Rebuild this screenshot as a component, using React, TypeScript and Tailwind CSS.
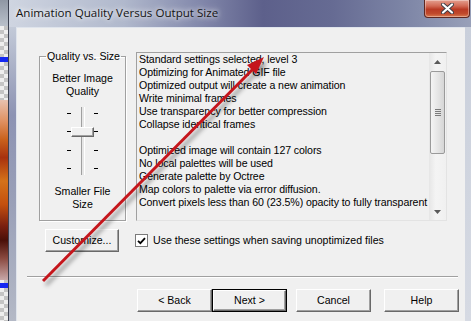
import React from "react";

const REPORT_LINES = [
  "Standard settings selected, level 3",
  "Optimizing for Animated GIF file",
  "Optimized output will create a new animation",
  "Write minimal frames",
  "Use transparency for better compression",
  "Collapse identical frames",
  "",
  "Optimized image will contain 127 colors",
  "No local palettes will be used",
  "Generate palette by Octree",
  "Map colors to palette via error diffusion.",
  "Convert pixels less than 60 (23.5%) opacity to fully transparent",
];

const checker =
  "bg-[repeating-conic-gradient(#c4c4c4_0_25%,#eeeeee_0_50%)] bg-[length:8px_8px]";

function ClassicButton({
  label,
  className,
  isDefault,
}: {
  label: string;
  className: string;
  isDefault?: boolean;
}) {
  return (
    <button
      type="button"
      className={`h-[23px] bg-[#f0f0f0] p-0 text-[10.6px] text-black ${
        isDefault ? "border border-black" : ""
      } ${className}`}
    >
      <span className="flex h-full w-full items-center justify-center border-t border-l border-t-white border-l-white border-r border-b border-r-[#696969] border-b-[#696969] shadow-[inset_-1px_-1px_0_#a0a0a0]">
        {label}
      </span>
    </button>
  );
}

function TickColumn() {
  return (
    <div className="flex w-[4px] flex-col justify-between py-[6px]">
      <div className="h-px w-[4px] bg-black" />
      <div className="h-px w-[4px] bg-black" />
      <div className="h-px w-[4px] bg-black" />
      <div className="h-px w-[4px] bg-black" />
    </div>
  );
}

function ScrollArrow({ down }: { down?: boolean }) {
  return (
    <div className="flex h-[17px] items-center justify-center">
      <svg width="7" height="4" viewBox="0 0 7 4">
        <polygon
          points={down ? "0,0 7,0 3.5,4" : "3.5,0 7,4 0,4"}
          fill="#5a5a5a"
        />
      </svg>
    </div>
  );
}

export default function App() {
  return (
    <div className="relative flex h-[321px] w-[471px] overflow-hidden bg-[#f0f0f0] font-['Liberation_Sans',Arial,sans-serif] text-[10.6px] text-black">
      {/* window behind the dialog */}
      <div className="flex w-[8px] flex-col">
        <div className="h-[26px] bg-[linear-gradient(180deg,#8f97a4,#b9c0ca)]" />
        <div className={`h-[31px] ${checker}`} />
        <div className="h-[5px] bg-[#1428f2]" />
        <div className={`h-[38px] ${checker}`} />
        <div className="h-[180px] bg-[linear-gradient(180deg,#e8c2b0_0%,#e09060_12%,#c9611c_22%,#a8320e_32%,#d4721a_45%,#c4500e_58%,#7a2010_70%,#4a1008_78%,#8a4a40_88%,#c8a8a8_100%)]" />
        <div className={`h-[3px] ${checker}`} />
        <div className="h-[5px] bg-[#1428f2]" />
        <div className={`flex-1 ${checker}`} />
      </div>

      {/* dialog window */}
      <div className="flex flex-1 flex-col border-l border-l-[#3c4150]">
        <div className="flex h-[27px] items-start bg-[linear-gradient(90deg,#cfd5e1_0%,#b0b8cc_25%,#868cae_40%,#5d608b_55%,#666b93_70%,#7c84a5_85%,#98a0b9_100%)] pl-[7px] pr-[1px]">
          <span className="mt-[5px] font-['Open_Sans',sans-serif] text-[11.6px] leading-[16px] text-[#141414] [text-shadow:0_0_5px_#ffffff,0_0_8px_rgba(255,255,255,0.8)]">
            Animation Quality Versus Output Size
          </span>
          <div className="ml-auto flex h-[18px] w-[46px] items-center justify-center rounded-b-[4px] border border-t-0 border-[#5e2720] bg-[linear-gradient(180deg,#e4a090_0%,#d26a55_35%,#b93a24_55%,#c04a2c_80%,#d97a50_100%)] shadow-[inset_0_0_0_1px_rgba(255,255,255,0.35)]">
            <svg width="13" height="11" viewBox="0 0 13 11">
              <path
                d="M2 1.5 L11 9.5 M11 1.5 L2 9.5"
                stroke="#3d3d46"
                strokeWidth="4"
                strokeLinecap="round"
              />
              <path
                d="M2 1.5 L11 9.5 M11 1.5 L2 9.5"
                stroke="#ffffff"
                strokeWidth="2.2"
                strokeLinecap="round"
              />
            </svg>
          </div>
        </div>

        <div className="flex flex-1">
          <div className="w-[7px] bg-[linear-gradient(180deg,#c3cad8_0%,#8d93b3_30%,#9aa0b8_60%,#b4b9c6_100%)]" />

          {/* client area */}
          <div className="flex flex-1 flex-col border-t border-l border-t-[#dfe4ec] border-l-[#dfe4ec] bg-[#f0f0f0]">
            <div className="flex items-start pl-[22px] pt-[22px]">
              <fieldset className="h-[171px] w-[87px] border border-[#a0a0a0] shadow-[1px_1px_0_#ffffff,inset_1px_1px_0_#ffffff]">
                <legend className="ml-[6px] px-[1px] leading-[13px]">
                  Quality vs. Size
                </legend>
                <div className="flex flex-col items-center pt-[9px] text-center leading-[13px]">
                  <div>
                    Better Image
                    <br />
                    Quality
                  </div>
                  <div className="mt-[9px] flex h-[68px]">
                    <TickColumn />
                    <div className="relative flex w-[23px] justify-center">
                      <div className="w-[4px] border-l border-r border-l-[#a0a0a0] border-r-white bg-[#e6e6e6]" />
                      <div className="absolute left-0 top-[20px] h-[10px] w-[23px] border-t border-l border-t-white border-l-white border-r border-b border-r-[#696969] border-b-[#696969] bg-[#f0f0f0] shadow-[inset_-1px_-1px_0_#a0a0a0]" />
                    </div>
                    <TickColumn />
                  </div>
                  <div className="mt-[10px]">
                    Smaller File
                    <br />
                    Size
                  </div>
                </div>
              </fieldset>

              <div className="ml-[10px] mt-[2px] flex h-[169px] w-[311px] border border-t-[#a0a0a0] border-l-[#a0a0a0] border-r-[#e3e3e3] border-b-[#e3e3e3] bg-[#f0f0f0]">
                <div className="flex-1 overflow-hidden whitespace-nowrap pl-[2px] leading-[13px] tracking-[-0.09px]">
                  {REPORT_LINES.map((line, i) => (
                    <div key={i} className="h-[13px]">
                      {line}
                    </div>
                  ))}
                </div>
                <div className="flex w-[17px] flex-col bg-[linear-gradient(90deg,#e6e6e6,#f4f4f4_40%,#f0f0f0)]">
                  <ScrollArrow />
                  <div className="mx-[1px] mt-px flex h-[83px] items-center justify-center rounded-[2px] border border-[#9a9a9a] bg-[linear-gradient(90deg,#f4f4f4,#e4e4e4_55%,#d6d6d6)]">
                    <div className="flex flex-col gap-[1px]">
                      <div className="h-px w-[6px] bg-[#7a7a7a]" />
                      <div className="h-px w-[6px] bg-[#7a7a7a]" />
                      <div className="h-px w-[6px] bg-[#7a7a7a]" />
                      <div className="h-px w-[6px] bg-[#7a7a7a]" />
                    </div>
                  </div>
                  <div className="flex-1" />
                  <ScrollArrow down />
                </div>
              </div>
            </div>

            <div className="mt-[8px] flex items-center pl-[28px]">
              <ClassicButton label="Customize..." className="w-[74px]" />
              <div className="ml-[16px] flex h-[13px] w-[13px] items-center justify-center border border-[#7a7a7a] bg-white">
                <svg width="9" height="8" viewBox="0 0 9 8">
                  <path
                    d="M1 3.8 L3.4 6.2 L8 1.2"
                    stroke="#000"
                    strokeWidth="1.8"
                    fill="none"
                  />
                </svg>
              </div>
              <span className="ml-[5px]">
                Use these settings when saving unoptimized files
              </span>
            </div>

            <div className="ml-[10px] mr-[7px] mt-[24px] h-[2px] border-t border-b border-t-[#a0a0a0] border-b-white" />

            <div className="mt-[11px] flex pl-[120px]">
              <ClassicButton label="< Back" className="w-[75px]" />
              <ClassicButton label="Next >" className="w-[75px]" isDefault />
              <ClassicButton label="Cancel" className="ml-[9px] w-[75px]" />
              <ClassicButton label="Help" className="ml-[13px] w-[75px]" />
            </div>
          </div>

          <div className="w-[6px] bg-[linear-gradient(180deg,#c9cfdb,#d6dae3)]" />
        </div>
      </div>

      {/* annotation arrow drawn over the screenshot */}
      <svg
        className="pointer-events-none absolute left-0 top-0"
        width="471"
        height="321"
        viewBox="0 0 471 321"
      >
        <defs>
          <filter id="arrowShadow" x="-20%" y="-20%" width="140%" height="140%">
            <feDropShadow
              dx="3"
              dy="4"
              stdDeviation="2"
              floodColor="#000"
              floodOpacity="0.4"
            />
          </filter>
        </defs>
        <g filter="url(#arrowShadow)">
          <line
            x1="43"
            y1="281"
            x2="253"
            y2="69"
            stroke="#c5161d"
            strokeWidth="3"
          />
          <polygon points="264,57 256,74 247,65" fill="#c5161d" />
        </g>
      </svg>
    </div>
  );
}
